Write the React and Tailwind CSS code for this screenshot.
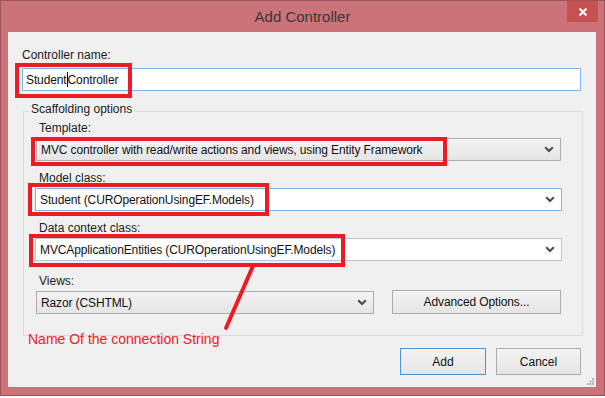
import React from 'react';

const Chevron = () => (
  <svg width="10" height="7" viewBox="0 0 10 7" className="shrink-0">
    <path d="M1.2 1.2 L5 5 L8.8 1.2" fill="none" stroke="#4a4a4a" strokeWidth="2" />
  </svg>
);

function Combo({ value, flat, widthClass, borderClass }) {
  return (
    <div
      className={`flex h-[23px] items-center justify-between border ${borderClass} ${widthClass} ${
        flat ? 'bg-white' : 'bg-gradient-to-b from-[#f3f3f3] to-[#e5e5e5]'
      }`}
    >
      <span className="pl-[4px] text-[12px] leading-[16px] tracking-[-0.12px] text-[#111]">{value}</span>
      <span className="mr-[6px]">
        <Chevron />
      </span>
    </div>
  );
}

function Field({ label, children, className = '' }) {
  return (
    <div className={className}>
      <div className="pl-[3px] text-[12px] leading-[16px] text-[#1b1b1b]">{label}</div>
      <div className="mt-[2px]">{children}</div>
    </div>
  );
}

export default function App() {
  return (
    <div className="relative h-[398px] w-[605px] bg-white font-['Liberation_Sans',Arial,sans-serif]">
      <div className="flex h-[396px] w-[605px] flex-col border border-[#9b525a] bg-[#cc7279]">
        {/* title bar */}
        <div className="flex h-[31px] items-start">
          <div className="w-[37px]" />
          <div className="flex-1 pt-[7px] text-center text-[15px] leading-[18px] text-[#383838]">
            Add Controller
          </div>
          <button
            type="button"
            className="mr-[6px] flex h-[21px] w-[31px] items-center justify-center bg-[#c75050]"
          >
            <svg width="10" height="10" viewBox="0 0 10 10">
              <path d="M1.5 1.5 L8.5 8.5 M8.5 1.5 L1.5 8.5" stroke="#fff" strokeWidth="2" />
            </svg>
          </button>
        </div>

        {/* client area */}
        <div className="relative mb-[8px] ml-[7px] mr-[8px] flex-1 bg-[#f0f0f0]">
          <div className="pl-[14px] pr-[15px] pt-[15px]">
            <div className="text-[12px] leading-[16px] text-[#1b1b1b]">Controller name:</div>
            <div className="mt-[5px] flex h-[23px] w-[559px] items-center border border-[#7eb4ea] bg-white pl-[3px] text-[12px] leading-[16px] tracking-[-0.12px] text-[#111]">
              <span>Student</span>
              <span className="h-[15px] border-l border-black" />
              <span>Controller</span>
            </div>

            <fieldset className="ml-[1px] mt-[10px] w-[560px] border border-[#dcdcdc] px-0 pb-[21px]">
              <legend className="ml-[5px] px-[2px] pb-[4px] text-[12px] leading-[16px] text-[#1b1b1b]">
                Scaffolding options
              </legend>
              <div className="-mt-[1px] pl-[12px]">
                <Field label="Template:">
                  <Combo
                    value="MVC controller with read/write actions and views, using Entity Framework"
                    widthClass="w-[525px]"
                    borderClass="border-[#acacac]"
                  />
                </Field>
                <Field label="Model class:" className="mt-[9px]">
                  <div className="-ml-[1px]">
                    <Combo
                      flat
                      value="Student (CUROperationUsingEF.Models)"
                      widthClass="w-[527px]"
                      borderClass="border-[#7eb4ea]"
                    />
                  </div>
                </Field>
                <Field label="Data context class:" className="mt-[9px]">
                  <div className="-ml-[1px]">
                    <Combo
                      flat
                      value="MVCApplicationEntities (CUROperationUsingEF.Models)"
                      widthClass="w-[527px]"
                      borderClass="border-[#b3c6de]"
                    />
                  </div>
                </Field>
                <div className="mt-[12px] flex items-end gap-[18px]">
                  <Field label="Views:">
                    <Combo value="Razor (CSHTML)" widthClass="w-[338px]" borderClass="border-[#acacac]" />
                  </Field>
                  <button
                    type="button"
                    className="h-[24px] w-[169px] border border-[#acacac] bg-gradient-to-b from-[#f3f3f3] to-[#e5e5e5] text-[12px] tracking-[-0.12px] text-[#111]"
                  >
                    Advanced Options...
                  </button>
                </div>
              </div>
            </fieldset>

            <div className="-mt-[5px] ml-[6px] text-[14px] leading-[17px] text-[#f0202a]">
              Name Of the connection String
            </div>

            <div className="flex justify-end gap-[10px]">
              <button
                type="button"
                className="h-[27px] w-[86px] border border-[#4c95dc] bg-gradient-to-b from-[#f3f3f3] to-[#e5e5e5] text-[12px] text-[#111]"
              >
                Add
              </button>
              <button
                type="button"
                className="h-[27px] w-[85px] border border-[#acacac] bg-gradient-to-b from-[#f3f3f3] to-[#e5e5e5] text-[12px] text-[#111]"
              >
                Cancel
              </button>
            </div>
          </div>

          {/* size grip */}
          <svg width="7" height="7" viewBox="0 0 7 7" className="absolute bottom-[2px] right-[2px]">
            <rect x="5" y="0" width="2" height="2" fill="#b8b8b8" />
            <rect x="2.5" y="2.5" width="2" height="2" fill="#b8b8b8" />
            <rect x="5" y="2.5" width="2" height="2" fill="#b8b8b8" />
            <rect x="0" y="5" width="2" height="2" fill="#b8b8b8" />
            <rect x="2.5" y="5" width="2" height="2" fill="#b8b8b8" />
            <rect x="5" y="5" width="2" height="2" fill="#b8b8b8" />
          </svg>
        </div>
      </div>

      {/* red annotation marks drawn over the dialog */}
      <div className="pointer-events-none absolute left-[15px] top-[63px] h-[35px] w-[117px] border-[4px] border-[#ed1c24]" />
      <div className="pointer-events-none absolute left-[31px] top-[137px] h-[29px] w-[416px] border-[4px] border-[#ed1c24]" />
      <div className="pointer-events-none absolute left-[28px] top-[183px] h-[33px] w-[241px] border-[4px] border-[#ed1c24]" />
      <div className="pointer-events-none absolute left-[29px] top-[234px] h-[33px] w-[316px] border-[4px] border-[#ed1c24]" />
      <svg width="605" height="398" className="pointer-events-none absolute left-0 top-0">
        <line x1="253" y1="266" x2="226" y2="328" stroke="#ed1c24" strokeWidth="4" strokeLinecap="round" />
      </svg>
    </div>
  );
}
